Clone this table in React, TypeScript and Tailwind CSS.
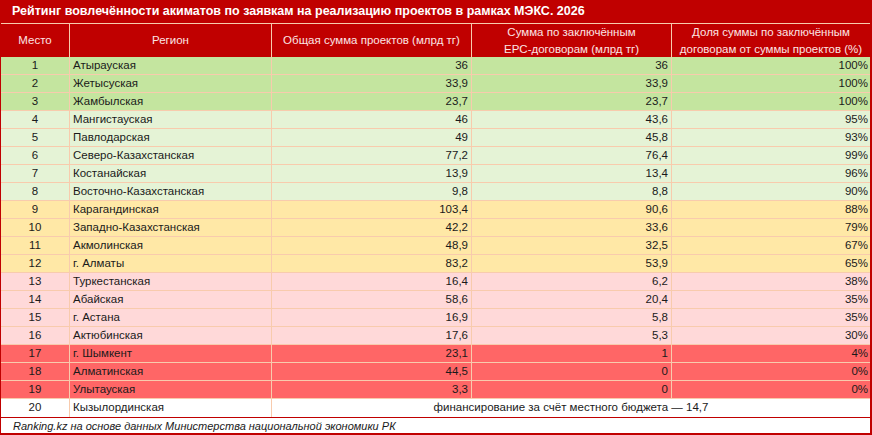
const rows: [number, string, string, string, string, string][] = [
  [1, 'Атырауская', '36', '36', '100%', 'bg-[#C4E59F]'],
  [2, 'Жетысуская', '33,9', '33,9', '100%', 'bg-[#C4E59F]'],
  [3, 'Жамбылская', '23,7', '23,7', '100%', 'bg-[#C4E59F]'],
  [4, 'Мангистауская', '46', '43,6', '95%', 'bg-[#E5F3D6]'],
  [5, 'Павлодарская', '49', '45,8', '93%', 'bg-[#E5F3D6]'],
  [6, 'Северо-Казахстанская', '77,2', '76,4', '99%', 'bg-[#E5F3D6]'],
  [7, 'Костанайская', '13,9', '13,4', '96%', 'bg-[#E5F3D6]'],
  [8, 'Восточно-Казахстанская', '9,8', '8,8', '90%', 'bg-[#E5F3D6]'],
  [9, 'Карагандинская', '103,4', '90,6', '88%', 'bg-[#FFE8A6]'],
  [10, 'Западно-Казахстанская', '42,2', '33,6', '79%', 'bg-[#FFE8A6]'],
  [11, 'Акмолинская', '48,9', '32,5', '67%', 'bg-[#FFE8A6]'],
  [12, 'г. Алматы', '83,2', '53,9', '65%', 'bg-[#FFE8A6]'],
  [13, 'Туркестанская', '16,4', '6,2', '38%', 'bg-[#FFD9D9]'],
  [14, 'Абайская', '58,6', '20,4', '35%', 'bg-[#FFD9D9]'],
  [15, 'г. Астана', '16,9', '5,8', '35%', 'bg-[#FFD9D9]'],
  [16, 'Актюбинская', '17,6', '5,3', '30%', 'bg-[#FFD9D9]'],
  [17, 'г. Шымкент', '23,1', '1', '4%', 'bg-[#FF6666]'],
  [18, 'Алматинская', '44,5', '0', '0%', 'bg-[#FF6666]'],
  [19, 'Улытауская', '3,3', '0', '0%', 'bg-[#FF6666]'],
];

const cell = 'h-[18px] flex items-center border-r border-b border-[#F8CBAD]';

export default function App() {
  return (
    <div
      className="w-[872px] h-[435px] bg-white border-l border-r-2 border-b-2 border-[#C00000] text-[11.5px] text-[#1a1a1a] flex flex-col"
      style={{ fontFamily: '"Liberation Sans", Arial, sans-serif' }}
    >
      <div className="h-[24px] shrink-0 bg-[#C00000] border-b border-[#F8CBAD] flex items-center pl-[11px] text-white font-bold text-[12.5px]">
        Рейтинг вовлечённости акиматов по заявкам на реализацию проектов в рамках МЭКС. 2026
      </div>

      <div className="grid grid-cols-[69px_202px_200px_200px_1fr]">
        {['Место', 'Регион', 'Общая сумма проектов (млрд тг)', 'Сумма по заключённым\nEPC-договорам (млрд тг)', 'Доля суммы по заключённым\nдоговорам от суммы проектов (%)'].map((h, i) => (
          <div
            key={i}
            className={`h-[33px] bg-[#C00000] text-[#FCE4E4] flex items-center justify-center text-center whitespace-pre-line leading-[17px] border-[#F8CBAD] ${i < 4 ? 'border-r' : ''}`}
          >
            {h}
          </div>
        ))}

        {rows.map(([n, region, total, epc, share, bg]) => (
          <div key={n} className="contents">
            <div className={`${cell} ${bg} justify-center`}>{n}</div>
            <div className={`${cell} ${bg} pl-[3px]`}>{region}</div>
            <div className={`${cell} ${bg} justify-end pr-[3px]`}>{total}</div>
            <div className={`${cell} ${bg} justify-end pr-[3px]`}>{epc}</div>
            <div className={`${cell} ${bg} justify-end pr-[2px] border-r-0`}>{share}</div>
          </div>
        ))}

        <div className="h-[18px] flex items-center justify-center border-r border-[#F8CBAD]">20</div>
        <div className="h-[18px] flex items-center pl-[3px] border-r border-[#F8CBAD]">Кызылординская</div>
        <div className="col-span-3 h-[18px] flex items-center justify-center">
          финансирование за счёт местного бюджета — 14,7
        </div>
      </div>

      <div className="flex-1 border-t border-[#C00000] flex items-center pl-[12px] italic text-[11px]">
        Ranking.kz на основе данных Министерства национальной экономики РК
      </div>
    </div>
  );
}
